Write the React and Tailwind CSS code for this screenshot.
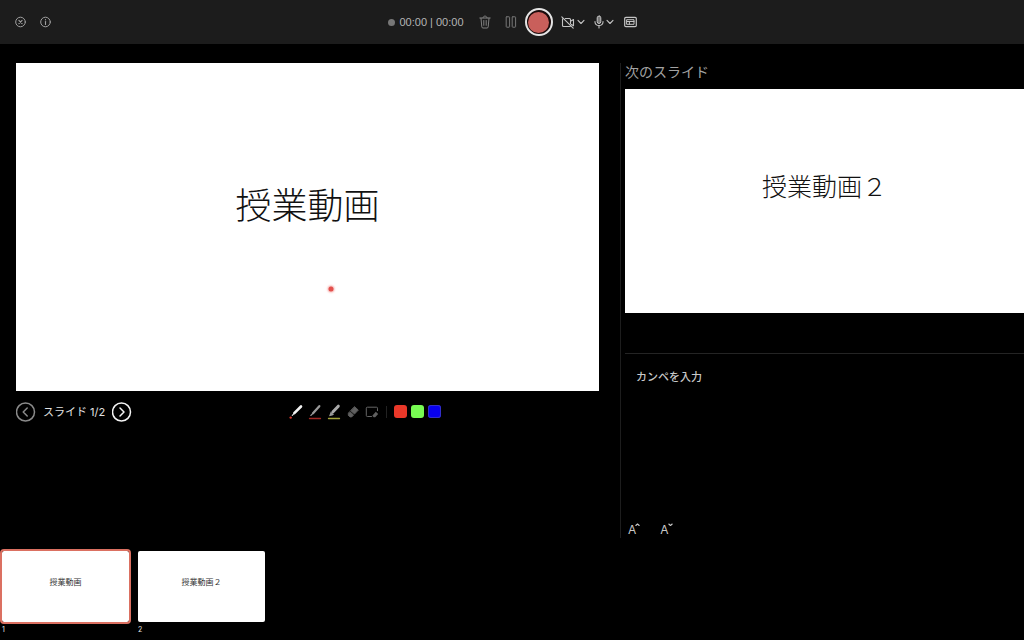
import { useState } from "react";

const inks = [
    { name: "赤", color: "bg-[#ea3829]" },
    { name: "緑", color: "bg-[#77fb52]" },
    { name: "青", color: "bg-[#0800ee] ring-1 ring-inset ring-[#3430c8]" },
];

const slides = [
    { id: 1, title: "授業動画" },
    { id: 2, title: "授業動画２" },
];

function Icon({ w, h, children, className = "" }) {
    return (
        <svg width={w} height={h} viewBox={`0 0 ${w} ${h}`} fill="none" stroke="currentColor" strokeLinecap="round" strokeLinejoin="round" className={`block shrink-0 ${className}`} aria-hidden="true">
            {children}
        </svg>
    );
}

function Chevron() {
    return (
        <Icon w={8} h={6}><path d="M1 1.3 4 4.5 7 1.3" strokeWidth="1.1" /></Icon>
    );
}

function TopBar() {
    return (
        <header className="grid h-11 shrink-0 grid-cols-[1fr_auto_1fr] items-center bg-[#1c1c1c] text-[#c4c4c4]">
            <div className="flex items-center gap-3 pl-[14px] text-[#a0a0a0]">
                <button type="button" aria-label="閉じる">
                    <Icon w={13} h={12}>
                        <circle cx="6.5" cy="6" r="4.8" />
                        <path d="m4.9 4.4 3.2 3.2M8.1 4.4 4.9 7.6" strokeWidth="1.1" />
                    </Icon>
                </button>
                <button type="button" aria-label="情報">
                    <Icon w={13} h={12}>
                        <circle cx="6.5" cy="6" r="4.8" />
                        <path d="M6.5 5.6v2.8" strokeWidth="1.1" />
                        <path d="M6.5 3.7v.1" strokeWidth="1.2" />
                    </Icon>
                </button>
            </div>

            <div className="flex items-center">
                <span className="size-[7px] rounded-full bg-[#777777]" />
                <span className="ml-[5px] w-[65px] whitespace-nowrap font-['Liberation_Sans',sans-serif] text-[11px] leading-4 text-[#b4b4b4]">00:00 | 00:00</span>
                <button type="button" aria-label="削除" className="ml-[14px] text-[#818181]">
                    <Icon w={12} h={14}>
                        <path d="M.8 3h10.4M4 2.8C4 .4 8 .4 8 2.8M2 3.2l.8 8.6q.1 1.2 1.2 1.2h4q1.1 0 1.2-1.2L10 3.2M4.8 5.5v4.8M7.2 5.5v4.8" />
                    </Icon>
                </button>
                <button type="button" aria-label="一時停止" className="ml-[14px] text-[#777777]">
                    <Icon w={12} h={12}>
                        <rect x="1.2" y=".8" width="3.4" height="10.4" rx=".6" />
                        <rect x="7.2" y=".8" width="3.4" height="10.4" rx=".6" />
                    </Icon>
                </button>
                <button type="button" aria-label="記録" className="ml-2 flex size-7 items-center justify-center rounded-full border-2 border-[#e4e4e4] bg-[#1c0b0b]">
                    <span className="size-[21px] rounded-full bg-[#c95f5b]" />
                </button>
                <button type="button" aria-label="カメラ" className="ml-2 flex items-center gap-[2px]">
                    <Icon w={14} h={13}>
                        <path d="M4.3 2.5H8.5q1 0 1 1v4.2M9.5 9.8q-.2.7-1 .7H2.5q-1 0-1-1v-6q0-.7.6-.9M9.500 5.300l3-1.800v6.200l-2-1.200M.8.9l11.4 11.300" strokeWidth="1.1" />
                    </Icon>
                    <Chevron />
                </button>
                <button type="button" aria-label="マイク" className="ml-[9px] flex items-center gap-[2px]">
                    <Icon w={10} h={14}>
                        <rect x="3.2" y="1" width="3.6" height="7.5" rx="1.8" fill="#777777" />
                        <path d="M1 6.500v.7q.4 3.300 4 3.300t4-3.300v-.7M5 10.500V13" strokeWidth="1.1" />
                    </Icon>
                    <Chevron />
                </button>
                <button type="button" aria-label="表示" className="ml-[10px]">
                    <Icon w={13} h={12}>
                        <rect x=".7" y="1.3" width="11.6" height="9.4" rx="1.2" strokeWidth="1.2" />
                        <path d="M3 3.7h7v4.600H3zM3 5.500h7M5.400 5.500v2.800" />
                    </Icon>
                </button>
            </div>
        </header>
    );
}

function PenTools() {
    return (
        <div className="flex items-center gap-[5px]">
            <button type="button" aria-label="レーザー ポインター">
                <Icon w={14} h={16}>
                    <path d="M5.3 9.2 12 2.5" stroke="#f4f4f4" strokeWidth="2.6" />
                    <path d="M3.3 11.3 5 9.6" stroke="#dddddd" strokeWidth="1.2" />
                    <circle cx="1.7" cy="13.6" r="1.2" fill="#d9382c" stroke="none" />
                </Icon>
            </button>
            <button type="button" aria-label="ペン">
                <Icon w={14} h={16}>
                    <path d="M5 9.2 11.3 2.2" stroke="#999999" strokeWidth="2.3" />
                    <path d="M2.8 11.5 4.7 9.6" stroke="#999999" strokeWidth="1.1" />
                    <path d="M1.5 14.500h11" stroke="#a02824" strokeWidth="1.3" />
                </Icon>
            </button>
            <button type="button" aria-label="蛍光ペン">
                <Icon w={14} h={16}>
                    <path d="M6 7.8 11.3 2.2" stroke="#aaaaaa" strokeWidth="3" />
                    <path d="m3.8 7.5 3.200 3-1.700.9-3.300.9z" fill="#999999" stroke="none" />
                    <path d="M1.5 14.500h11" stroke="#a3a33a" strokeWidth="1.3" />
                </Icon>
            </button>
            <button type="button" aria-label="消しゴム">
                <Icon w={14} h={16}>
                    <path d="m8.700 2.800 3.600 3.300-3.800 4-3.700-3.300z" fill="#606060" stroke="#606060" strokeWidth=".8" />
                    <path d="m4 7.700 3.600 3.300-1.900 2H4L2.300 11.300V9.500z" fill="#606060" stroke="#606060" strokeWidth=".8" />
                </Icon>
            </button>
            <button type="button" aria-label="すべて消去">
                <Icon w={14} h={16}>
                    <path d="M6.500 12.500H2.300q-1 0-1-1V4.200q0-1 1-1h9.200q1 0 1 1v2.500" stroke="#666666" />
                    <path d="m10.800 7.800 2.400 2.300-3 3.200H8.700l-1.400-1.500z" fill="#606060" stroke="none" />
                </Icon>
            </button>
            <span className="ml-[2px] h-3 w-px bg-[#222222]" />
            <div className="ml-[2px] flex gap-1">
                {inks.map((ink) => (
                    <button key={ink.name} type="button" aria-label={ink.name} className={`size-[13px] rounded-[3px] ${ink.color}`} />
                ))}
            </div>
        </div>
    );
}

function FontSizeIcon({ d }) {
    return (
        <span className="flex items-start text-xs leading-4">
            A
            <Icon w={5} h={4} className="-ml-px mt-px"><path d={d} strokeWidth="1.1" /></Icon>
        </span>
    );
}

export default function App() {
    const [current, setCurrent] = useState(1);
    const [notes, setNotes] = useState("");
    const slide = slides[current - 1];

    return (
        <div className="flex min-h-screen flex-col bg-black font-[Inter,'Noto_Sans_CJK_JP',sans-serif] text-white">
            <TopBar />

            <main className="grid flex-1 grid-cols-[620fr_404fr] pt-[19px]">
                <section className="pl-4 pr-[21px]">
                    <div className="relative flex aspect-video justify-center bg-white pt-[113px]">
                        <h1 className="font-['Noto_Sans_CJK_JP',sans-serif] text-4xl leading-[54px] font-light text-[#111111]">{slide.title}</h1>
                        <span className="absolute left-[54%] top-[69%] size-[5px] -translate-x-1/2 -translate-y-1/2 rounded-full bg-[#e3504c] shadow-[0_0_2px_1px_#f7b5b3]" />
                    </div>
                    <div className="mt-[11px] flex items-center">
                        <button type="button" aria-label="前のスライド" onClick={() => setCurrent(1)} className="text-[#8a8a8a]">
                            <Icon w={20} h={20}><circle cx="9.5" cy="10" r="9" strokeWidth="1.5" /><path d="m11.2 6-4 4 4 4" strokeWidth="1.5" /></Icon>
                        </button>
                        <span className="ml-[7px] w-[62px] whitespace-nowrap text-[11px] leading-4 text-[#e2e2e2]">スライド {current}/2</span>
                        <button type="button" aria-label="次のスライド" onClick={() => setCurrent(2)} className="ml-[7px] text-[#f4f4f4]">
                            <Icon w={20} h={20}><circle cx="9.5" cy="10" r="9" strokeWidth="1.5" /><path d="m8 6 4 4-4 4" strokeWidth="1.5" /></Icon>
                        </button>
                        <div className="ml-[157px]">
                            <PenTools />
                        </div>
                    </div>
                </section>

                <aside className="flex flex-col border-l border-[#1d1d1d] pl-1">
                    <h2 className="text-[14px] leading-[18px] text-[#a3a3a3]">次のスライド</h2>
                    <div className="mt-2 flex aspect-video justify-center bg-white pt-[77px]">
                        <p className="font-['Noto_Sans_CJK_JP',sans-serif] text-[25px] leading-[38px] font-light text-[#111111]">授業動画２</p>
                    </div>
                    <textarea
                        aria-label="カンペ"
                        placeholder="カンペを入力"
                        value={notes}
                        onChange={(e) => setNotes(e.target.value)}
                        className="mt-10 block min-h-[150px] w-full flex-1 resize-none border-t border-[#242424] bg-transparent px-[11px] pt-[15px] text-[11px] leading-4 font-medium text-[#c8c8c8] outline-none placeholder:text-[#c8c8c8]"
                    />
                    <div className="flex gap-5 pl-[3px] text-[#c8c8c8]">
                        <button type="button" aria-label="文字を大きく"><FontSizeIcon d="M.8 2.500 2.500 1l1.700 1.500" /></button>
                        <button type="button" aria-label="文字を小さく"><FontSizeIcon d="M.8 1 2.500 2.500 4.200 1" /></button>
                    </div>
                </aside>
            </main>

            <nav aria-label="スライド一覧" className="mt-[11px] flex gap-[5px]">
                {slides.map((s) => (
                    <button key={s.id} type="button" onClick={() => setCurrent(s.id)} className="text-left">
                        <span className={`flex h-[75px] w-[131px] justify-center rounded border-2 bg-white bg-clip-padding pt-[25px] font-['Noto_Sans_CJK_JP',sans-serif] text-[8px] leading-3 text-[#333333] ${s.id === current ? "border-[#db7061]" : "border-transparent"}`}>
                            {s.title}
                        </span>
                        <span className="block pl-[2px] text-[7px] leading-3 text-[#e2e2e2]">{s.id}</span>
                    </button>
                ))}
            </nav>
            <div className="h-1" />
        </div>
    );
}
